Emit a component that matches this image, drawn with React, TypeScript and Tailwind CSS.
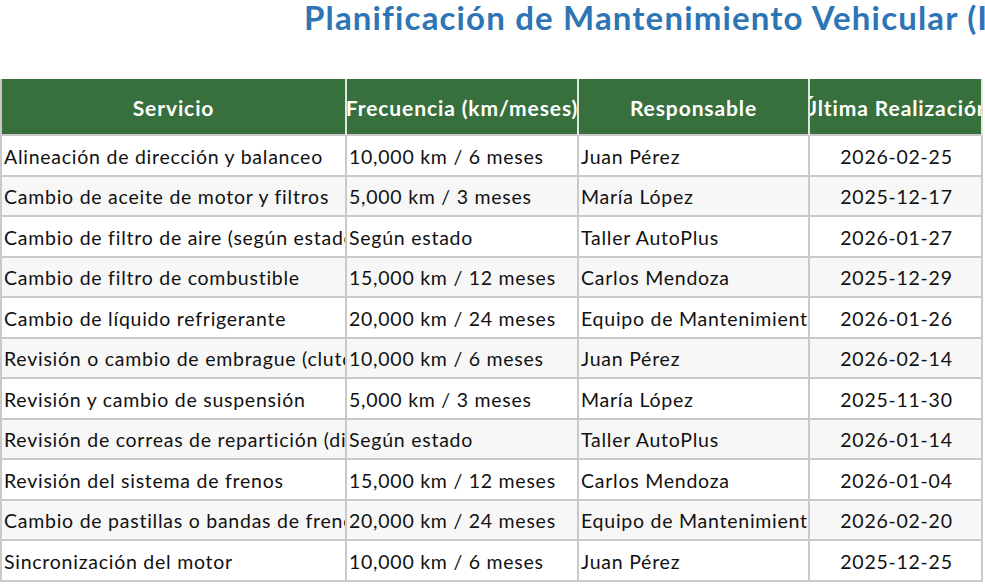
const rows = [
  ["Alineación de dirección y balanceo", "10,000 km / 6 meses", "Juan Pérez", "2026-02-25"],
  ["Cambio de aceite de motor y filtros", "5,000 km / 3 meses", "María López", "2025-12-17"],
  ["Cambio de filtro de aire (según estado)", "Según estado", "Taller AutoPlus", "2026-01-27"],
  ["Cambio de filtro de combustible", "15,000 km / 12 meses", "Carlos Mendoza", "2025-12-29"],
  ["Cambio de líquido refrigerante", "20,000 km / 24 meses", "Equipo de Mantenimiento", "2026-01-26"],
  ["Revisión o cambio de embrague (clutch)", "10,000 km / 6 meses", "Juan Pérez", "2026-02-14"],
  ["Revisión y cambio de suspensión", "5,000 km / 3 meses", "María López", "2025-11-30"],
  ["Revisión de correas de repartición (distribución)", "Según estado", "Taller AutoPlus", "2026-01-14"],
  ["Revisión del sistema de frenos", "15,000 km / 12 meses", "Carlos Mendoza", "2026-01-04"],
  ["Cambio de pastillas o bandas de freno", "20,000 km / 24 meses", "Equipo de Mantenimiento", "2026-02-20"],
  ["Sincronización del motor", "10,000 km / 6 meses", "Juan Pérez", "2025-12-25"],
];

const headers = ["Servicio", "Frecuencia (km/meses)", "Responsable", "Última Realización"];

export default function App() {
  return (
    <div className="relative h-[584px] w-[985px] overflow-hidden bg-white font-['Lato',sans-serif] text-[#111]">
      <div className="h-[79px] overflow-hidden whitespace-nowrap pl-[304px] text-[33px] font-bold leading-[34px] tracking-[1.15px] text-[#2e75b6]">
        Planificación de Mantenimiento Vehicular (Intervalos)
      </div>
      <div className="grid w-[983px] grid-cols-[345px_232px_231px_173px] border-l-2 border-[#c9c9c9]">
        {headers.map((h) => (
          <div
            key={h}
            className="flex h-[57px] items-center justify-center overflow-hidden whitespace-nowrap border-r-2 border-b-2 border-r-[#dfe6df] border-b-[#c9c9c9] bg-[#38703d] pt-[2px] text-[21px] font-bold tracking-[0.9px] text-white"
          >
            <span>{h}</span>
          </div>
        ))}
        {rows.map((r, i) => {
          const bg = i % 2 === 1 ? "bg-[#f7f7f7]" : "bg-white";
          return (
            <div key={i} className="contents">
              {r.map((c, j) => (
                <div
                  key={j}
                  className={`flex h-[40.5px] items-center overflow-hidden whitespace-nowrap border-r-2 border-b-2 border-[#c9c9c9] pl-[2px] pt-[2px] text-[19.5px] tracking-[0.75px] ${bg} ${j === 3 ? "justify-center" : ""}`}
                >
                  <span>{c}</span>
                </div>
              ))}
            </div>
          );
        })}
      </div>
    </div>
  );
}
